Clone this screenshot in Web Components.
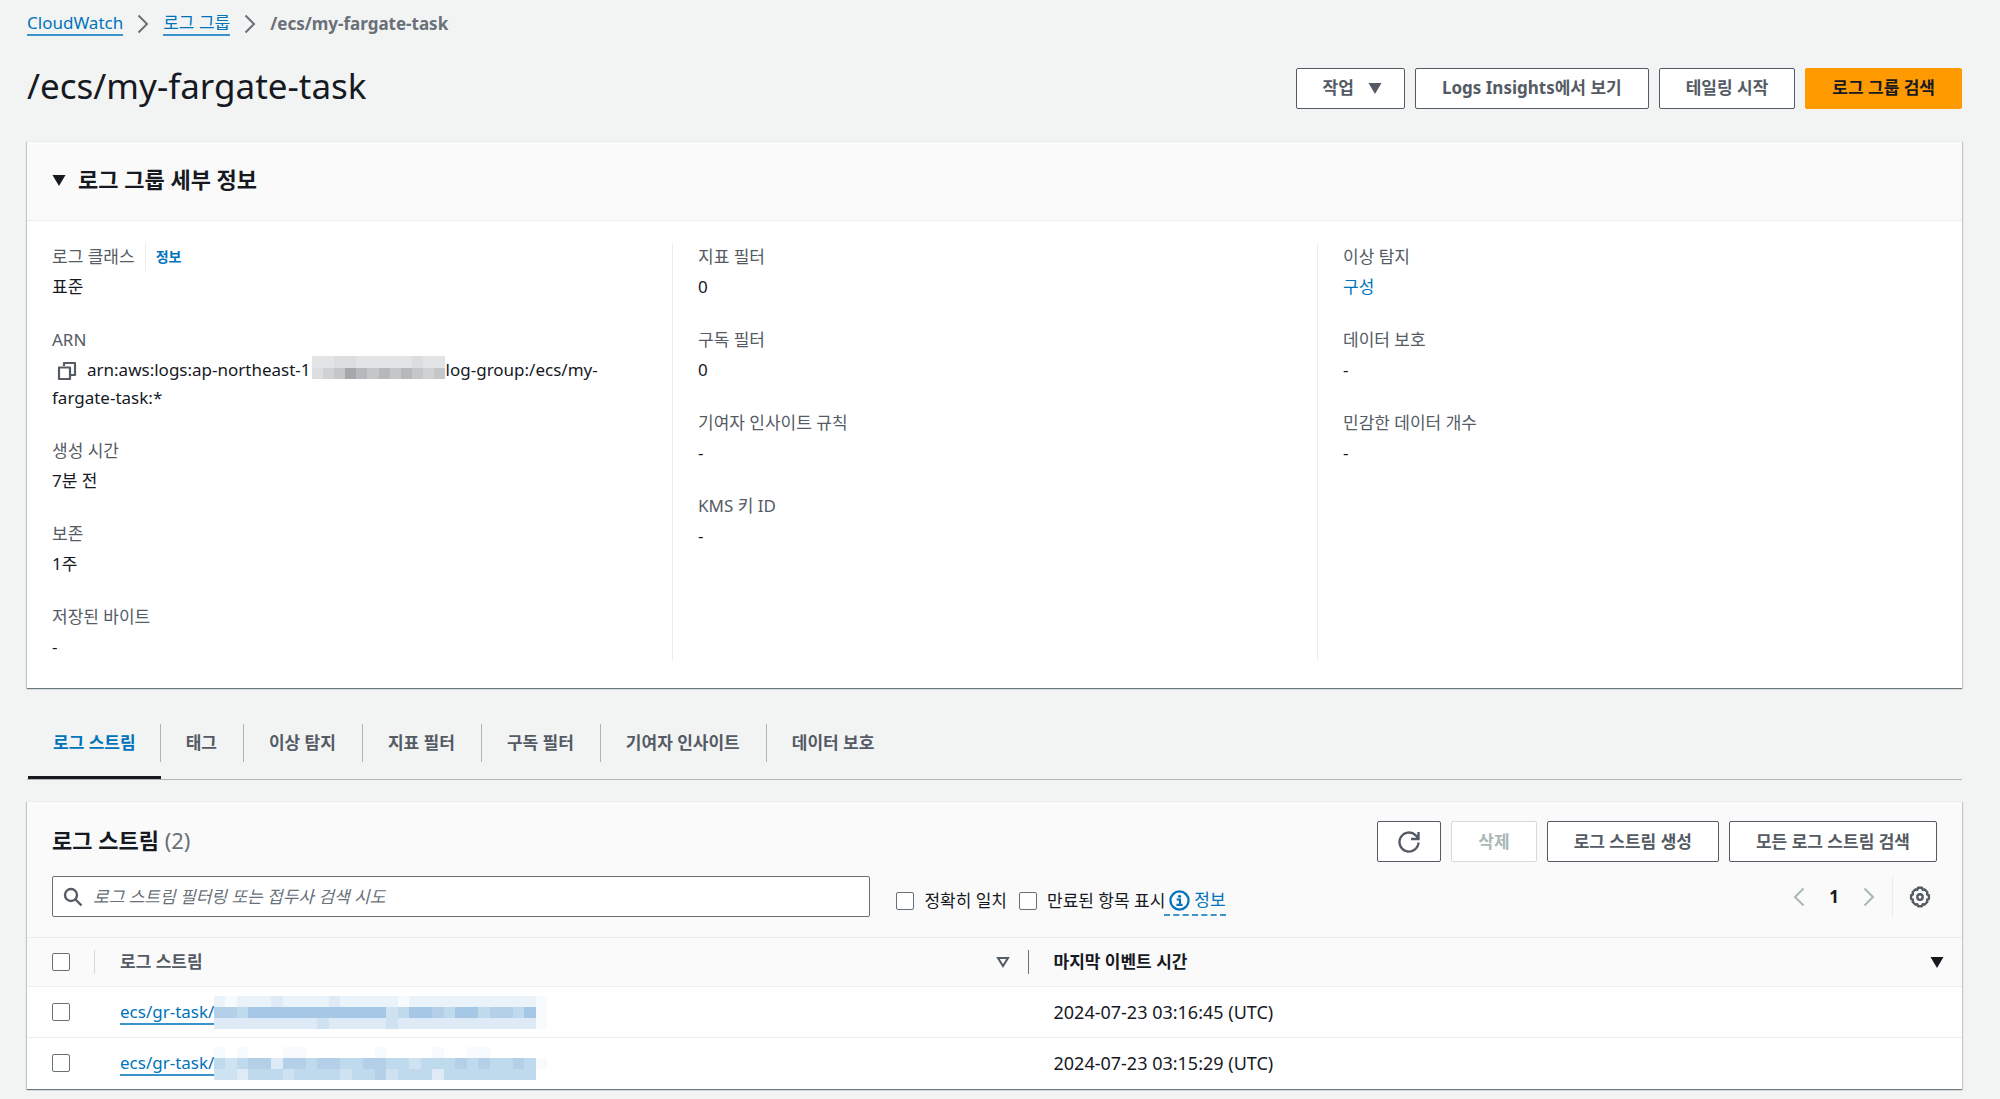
<!DOCTYPE html>
<html lang="ko">
<head>
<meta charset="utf-8">
<title>CloudWatch - /ecs/my-fargate-task</title>
<style>
  :root {
    --ink: #16191f;
    --muted: #545b64;
    --soft: #687078;
    --link: #0073bb;
    --line: #eaeded;
    --head: #fafafa;
  }
  * { box-sizing: border-box; }
  body {
    margin: 0;
    background: #f2f3f3;
    color: var(--ink);
    font: 17px/28px "Noto Sans", "Noto Sans CJK KR", sans-serif;
  }
</style>
</head>
<body>
<cw-page></cw-page>

<script>
const base = `*{box-sizing:border-box} a{color:var(--link);text-decoration:none} button,input{font:inherit;color:inherit;margin:0}`;

function define(name, css, html, setup) {
  const template = document.createElement('template');
  template.innerHTML = `<style>${base}${css}</style>${html}`;
  customElements.define(name, class extends HTMLElement {
    constructor() {
      super();
      this.attachShadow({ mode: 'open' }).append(template.content.cloneNode(true));
    }
    connectedCallback() { if (setup) setup(this, this.shadowRoot); }
  });
}

const icons = {
  chevron: ['0 0 12 20', '<path d="M1.500 1.500 10 10l-8.500 8.500" fill="none" stroke="currentColor" stroke-width="2"/>'],
  back: ['0 0 12 20', '<path d="M10.500 1.500 2 10l8.500 8.500" fill="none" stroke="currentColor" stroke-width="2"/>'],
  down: ['0 0 14 12', '<path d="M.5 1h13L7 12z" fill="currentColor"/>'],
  sort: ['0 0 14 12', '<path d="M2 2h10l-5 8z" fill="none" stroke="currentColor" stroke-width="2"/>'],
  copy: ['0 0 20 20', '<path d="M7 5V2h11v12h-4M2 6.500h11V18H2z" fill="none" stroke="currentColor" stroke-width="2.200" stroke-linejoin="round"/>'],
  search: ['0 0 20 20', '<circle cx="8" cy="8" r="6" fill="none" stroke="currentColor" stroke-width="2.400"/><path d="m12 12 6.500 6.500" stroke="currentColor" stroke-width="2.400"/>'],
  refresh: ['0 0 22 22', '<path d="M20.500 11.500a9.500 9.500 0 1 1-2.800-7.200L20 7M20.500 1v7H13" fill="none" stroke="currentColor" stroke-width="2.400"/>'],
  info: ['0 0 22 22', '<circle cx="11" cy="11" r="9.500" fill="none" stroke="currentColor" stroke-width="2.400"/><circle cx="11" cy="6.500" r="1.600" fill="currentColor"/><path d="M8 10h3.500v5.500M7.800 15.600h6.400" fill="none" stroke="currentColor" stroke-width="2.200"/>'],
  gear: ['0 0 22 22', '<path d="M9 1.800h4l.7 2 2.100-.3 2.600 2.800-.4 2 1.900.9v3.600l-1.900.9.4 2-2.600 2.800-2.100-.3-.7 2H9l-.7-2-2.100.3-2.600-2.800.4-2-1.900-.9V9.200L4 8.300l-.4-2 2.600-2.800 2.100.3z" fill="none" stroke="currentColor" stroke-width="2.400" stroke-linejoin="round"/><circle cx="11" cy="11" r="2.700" fill="none" stroke="currentColor" stroke-width="2.400"/>']
};

define('cw-icon', `:host{display:inline-flex;flex:none;width:20px;height:20px} svg{width:100%;height:100%;display:block}`, ``, (host, root) => {
  const [box, art] = icons[host.getAttribute('name')];
  root.innerHTML += `<svg viewBox="${box}" aria-hidden="true">${art}</svg>`;
});

/* Pixelated block that covers private identifiers. Rows are "|" separated, cells are palette digits. */
const palettes = {
  grey: ['#ffffff', '#fafafa', '#e3e4e5', '#dcddde', '#cfd1d2', '#c4c6c8', '#b6b8bb', '#a5a8ab'],
  blue: ['#ffffff', '#f7fbfd', '#ebf3fa', '#deebf6', '#cfe2f2', '#bfd9ed', '#b4d0e8', '#a4c8e5']
};
define('cw-mosaic', `:host{display:inline-block;flex:none} svg{width:100%;height:100%;display:block}`, ``, (host, root) => {
  const rows = host.getAttribute('rows').split('|');
  const colors = palettes[host.getAttribute('tone')];
  const cells = rows.map((row, y) => [...row].map((c, x) => `<rect x="${x}" y="${y}" width="1" height="1" fill="${colors[c]}"/>`).join('')).join('');
  root.innerHTML += `<svg viewBox="0 0 ${rows[0].length} ${rows.length}" preserveAspectRatio="none" shape-rendering="crispEdges" aria-hidden="true">${cells}</svg>`;
});

define('cw-button', `
  :host{display:inline-flex}
  button{display:flex;align-items:center;justify-content:center;gap:14px;height:41px;padding:0 26px;border:1px solid var(--muted);border-radius:2px;background:#fff;color:var(--muted);font-weight:700;white-space:nowrap}
  :host([primary]) button{background:#ff9900;border-color:#ff9900;color:var(--ink)}
  button:disabled{border-color:#d5dbdb;color:#aab7b8}
  :host([square]) button{padding:0 20px}
  :host([menu]) button{padding-right:22px}
`, `<button type="button"><slot></slot></button>`, (host, root) => {
  const b = root.querySelector('button');
  b.disabled = host.hasAttribute('disabled');
  if (host.hasAttribute('label')) b.setAttribute('aria-label', host.getAttribute('label'));
});

define('cw-checkbox', `
  :host{display:inline-flex}
  label{display:flex;align-items:center;gap:10px;white-space:nowrap}
  input{appearance:none;flex:none;width:18px;height:18px;border:1px solid #687078;border-radius:2px;background:#fff}
`, `<label><input type="checkbox"><slot></slot></label>`, (host, root) => {
  if (host.hasAttribute('label')) root.querySelector('input').setAttribute('aria-label', host.getAttribute('label'));
});

define('cw-breadcrumbs', `
  :host{display:block}
  nav{display:flex;align-items:center;gap:14px;height:28px;line-height:22px}
  a{border-bottom:2px solid #3b93cc}
  cw-icon{width:12px;height:20px;color:var(--soft)}
  b{color:var(--soft)}
`, `<nav aria-label="Breadcrumbs"><a href="#">CloudWatch</a><cw-icon name="chevron"></cw-icon><a href="#">로그 그룹</a><cw-icon name="chevron"></cw-icon><b>/ecs/my-fargate-task</b></nav>`);

define('cw-header', `
  :host{display:flex;justify-content:space-between;align-items:center}
  h1{margin:0;padding-bottom:4px;font-size:35px;line-height:40px;font-weight:400}
  div{display:flex;gap:10px}
`, `<h1><slot></slot></h1><div><slot name="actions"></slot></div>`);

define('cw-panel', `
  :host{display:block;background:#fff;border-top:1px solid var(--line);box-shadow:0 1px 1px rgba(0,28,36,.4),1px 1px 1px rgba(0,28,36,.15),-1px 1px 1px rgba(0,28,36,.15)}
`, `<slot></slot>`);

define('cw-field', `
  :host{display:block}
  dl,dd{margin:0}
  dt{display:flex;color:var(--muted)}
  dd{margin-top:2px}
`, `<dl><dt><slot name="label"></slot></dt><dd><slot></slot></dd></dl>`);

define('cw-details', `
  :host{display:block}
  header{background:var(--head);border-bottom:1px solid var(--line);padding:22px 25px 25px}
  h2{margin:0;font-size:22px;line-height:31px;font-weight:700}
  h2 button{display:flex;align-items:center;gap:12px;padding:0;border:0;background:none}
  h2 cw-icon{width:14px;height:12px}
  .columns{display:grid;grid-template-columns:repeat(3,1fr);padding:22px 0 27px}
  .column{display:flex;flex-direction:column;gap:25px;padding:0 25px}
  .column + .column{border-left:1px solid var(--line)}
  .info{margin-left:10px;padding-left:10px;border-left:1px solid var(--line);font-size:14px;font-weight:700}
  .copy{border:0;background:none;padding:0;margin:0 10px 0 5px;height:20px;color:var(--muted);vertical-align:middle}
  cw-mosaic{width:133px;height:23px;margin:0 1px;vertical-align:top}
`, `
  <header><h2><button type="button" aria-expanded="true"><cw-icon name="down"></cw-icon>로그 그룹 세부 정보</button></h2></header>
  <div class="columns">
    <div class="column">
      <cw-field><span slot="label">로그 클래스</span><a slot="label" class="info" href="#">정보</a>표준</cw-field>
      <cw-field><span slot="label">ARN</span><button class="copy" type="button" aria-label="복사"><cw-icon name="copy"></cw-icon></button>arn:aws:logs:ap-northeast-1<cw-mosaic tone="grey" rows="223322222322|345765656545"></cw-mosaic>log-group:/ecs/my-<br>fargate-task:*</cw-field>
      <cw-field><span slot="label">생성 시간</span>7분 전</cw-field>
      <cw-field><span slot="label">보존</span>1주</cw-field>
      <cw-field><span slot="label">저장된 바이트</span>-</cw-field>
    </div>
    <div class="column">
      <cw-field><span slot="label">지표 필터</span>0</cw-field>
      <cw-field><span slot="label">구독 필터</span>0</cw-field>
      <cw-field><span slot="label">기여자 인사이트 규칙</span>-</cw-field>
      <cw-field><span slot="label">KMS 키 ID</span>-</cw-field>
    </div>
    <div class="column">
      <cw-field><span slot="label">이상 탐지</span><a href="#">구성</a></cw-field>
      <cw-field><span slot="label">데이터 보호</span>-</cw-field>
      <cw-field><span slot="label">민감한 데이터 개수</span>-</cw-field>
    </div>
  </div>`);

define('cw-tabs', `
  :host{display:flex;padding-left:1px;border-bottom:1px solid #aab7b8}
`, `<slot></slot>`, host => host.setAttribute('role', 'tablist'));

define('cw-tab', `
  :host{display:block;padding-bottom:14px;border-bottom:3px solid transparent}
  :host([active]){border-color:var(--ink)}
  button{height:38px;padding:0 26px 0 25px;border:0;border-right:1px solid #aab7b8;background:none;color:var(--muted);font-weight:700}
  :host([active]) button{padding-right:24px;color:var(--link)}
  :host(:last-child) button{border-right-color:transparent}
`, `<button type="button" role="tab"><slot></slot></button>`);

define('cw-toolbar', `
  :host{display:block;background:var(--head);padding:19px 25px 20px}
  .row{display:flex;align-items:center;justify-content:space-between}
  .row + .row{margin-top:14px}
  h2{margin:0;font-size:22px;line-height:31px;padding-bottom:2px}
  h2 span{font-weight:400;color:var(--soft)}
  .actions{display:flex;gap:10px}
  .actions cw-icon{width:22px;height:22px}
  .filters{display:flex;align-items:center;flex:1}
  .search{display:flex;align-items:center;gap:10px;width:47%;height:41px;padding:0 11px 0 10px;border:1px solid #687078;border-radius:2px;background:#fff;color:var(--muted)}
  .search input{flex:1;min-width:0;border:0;outline:0;padding:0;background:none}
  .search input::placeholder{color:var(--soft);font-style:italic;opacity:1}
  .checks{display:flex;align-items:center;gap:12px;padding:9px 0 0 26px}
  .help{display:flex;align-items:center;gap:4px;margin-left:-13px;padding:0 0 0 5px;border-bottom:2px dashed #3b93cc}
  .help cw-icon{width:21px;height:21px}
  .pages{display:flex;align-items:center;height:41px;color:var(--ink);font-weight:700}
  .pages button{display:flex;border:0;background:none;padding:0;color:#aab7b8}
  .pages .arrow cw-icon{width:12px;height:20px}
  .pages span{padding:0 24px}
  .pages .settings{align-items:center;height:41px;margin-left:17px;padding:0 6px 0 16px;border-left:1px solid var(--line);color:var(--muted)}
  .settings cw-icon{width:22px;height:22px}
`, `
  <div class="row">
    <h2>로그 스트림 <span>(2)</span></h2>
    <div class="actions">
      <cw-button square label="새로 고침"><cw-icon name="refresh"></cw-icon></cw-button>
      <cw-button disabled>삭제</cw-button>
      <cw-button>로그 스트림 생성</cw-button>
      <cw-button>모든 로그 스트림 검색</cw-button>
    </div>
  </div>
  <div class="row">
    <div class="filters">
      <label class="search"><cw-icon name="search"></cw-icon><input type="search" aria-label="로그 스트림 필터링" placeholder="로그 스트림 필터링 또는 접두사 검색 시도"></label>
      <div class="checks">
        <cw-checkbox>정확히 일치</cw-checkbox>
        <cw-checkbox>만료된 항목 표시</cw-checkbox>
        <a class="help" href="#"><cw-icon name="info"></cw-icon>정보</a>
      </div>
    </div>
    <div class="pages">
      <button class="arrow" type="button" aria-label="이전 페이지"><cw-icon name="back"></cw-icon></button>
      <span>1</span>
      <button class="arrow" type="button" aria-label="다음 페이지"><cw-icon name="chevron"></cw-icon></button>
      <button class="settings" type="button" aria-label="설정"><cw-icon name="gear"></cw-icon></button>
    </div>
  </div>`);

define('cw-streams', `
  :host{display:block}
  table{width:100%;border-collapse:collapse;table-layout:fixed}
  col:first-child{width:68px}
  th,td{padding:0 25px;text-align:left;vertical-align:middle}
  th{height:49px;background:var(--head);border-top:1px solid var(--line);border-bottom:1px solid var(--line)}
  td{height:51px;border-top:1px solid var(--line)}
  th:first-child,td:first-child{padding-right:0}
  .cell{display:flex;align-items:center;justify-content:space-between;height:24px}
  th:first-child .cell{border-right:1px solid #d5dbdb}
  th:nth-child(2){padding-right:0;color:var(--muted)}
  th:nth-child(2) .cell{padding-right:18px;border-right:1px solid #687078}
  th:last-child{padding-right:18px}
  cw-icon{width:14px;height:12px}
  .name{display:flex;align-items:center}
  .name a{line-height:23px;border-bottom:2px solid #3b93cc}
  cw-mosaic{width:333px;height:33px}
  time{font-size:18px}
`, `
  <table>
    <colgroup><col><col><col></colgroup>
    <thead><tr>
      <th><div class="cell"><cw-checkbox label="모두 선택"></cw-checkbox></div></th>
      <th><div class="cell">로그 스트림<cw-icon name="sort"></cw-icon></div></th>
      <th><div class="cell">마지막 이벤트 시간<cw-icon name="down"></cw-icon></div></th>
    </tr></thead>
    <tbody>
      <tr>
        <td><div class="cell"><cw-checkbox label="스트림 1 선택"></cw-checkbox></div></td>
        <td><div class="name"><a href="#">ecs/gr-task/</a><cw-mosaic tone="blue" rows="21222322223222221222222222221|66577777777777745776577566571|33333333343333343333333333331"></cw-mosaic></div></td>
        <td><time datetime="2024-07-23T03:16:45Z">2024-07-23 03:16:45 (UTC)</time></td>
      </tr>
      <tr>
        <td><div class="cell"><cw-checkbox label="스트림 2 선택"></cw-checkbox></div></td>
        <td><div class="name"><a href="#">ecs/gr-task/</a><cw-mosaic tone="blue" rows="10100011000000100001001100000|54566366566556655455565655651|44355545555455645553555555550"></cw-mosaic></div></td>
        <td><time datetime="2024-07-23T03:15:29Z">2024-07-23 03:15:29 (UTC)</time></td>
      </tr>
    </tbody>
  </table>`);

define('cw-page', `
  :host{display:block;padding:10px 38px 12px 27px}
  cw-header{margin-top:28px}
  cw-panel{margin-top:31px}
  cw-tabs{margin-top:36px}
  cw-tabs + cw-panel{margin-top:21px}
  .caret{width:14px;height:12px}
`, `
  <cw-breadcrumbs></cw-breadcrumbs>
  <cw-header>/ecs/my-fargate-task
    <cw-button slot="actions" menu>작업<cw-icon class="caret" name="down"></cw-icon></cw-button>
    <cw-button slot="actions">Logs Insights에서 보기</cw-button>
    <cw-button slot="actions">테일링 시작</cw-button>
    <cw-button slot="actions" primary>로그 그룹 검색</cw-button>
  </cw-header>
  <cw-panel><cw-details></cw-details></cw-panel>
  <cw-tabs>
    <cw-tab active>로그 스트림</cw-tab><cw-tab>태그</cw-tab><cw-tab>이상 탐지</cw-tab><cw-tab>지표 필터</cw-tab><cw-tab>구독 필터</cw-tab><cw-tab>기여자 인사이트</cw-tab><cw-tab>데이터 보호</cw-tab>
  </cw-tabs>
  <cw-panel><cw-toolbar></cw-toolbar><cw-streams></cw-streams></cw-panel>`);
</script>
</body>
</html>
